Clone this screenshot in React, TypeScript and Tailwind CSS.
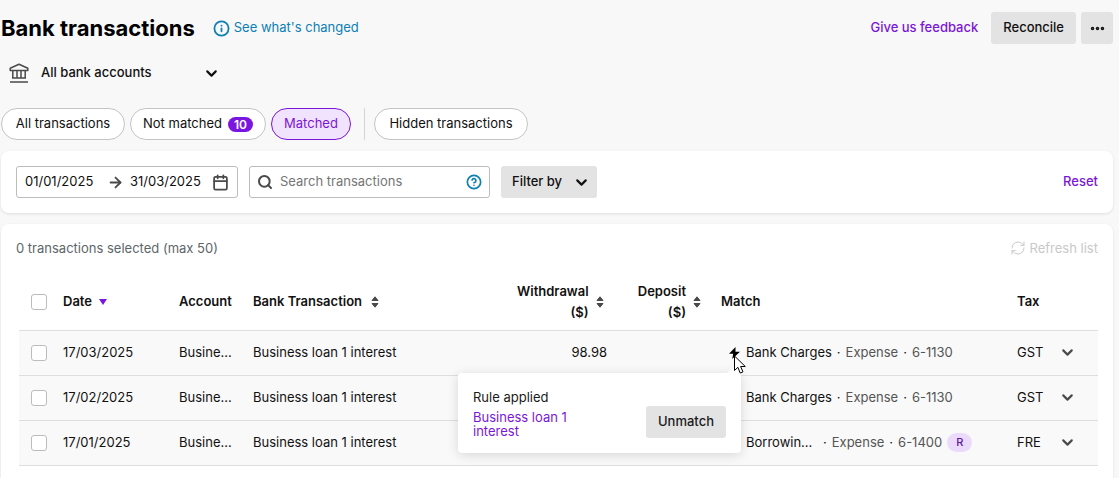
import React, { useState } from 'react';
import { ArrowRight, Calendar, ChevronDown, CircleHelp, Ellipsis, Info, RefreshCw, Search } from 'lucide-react';

const transactions = [
  { id: 1, date: '17/03/2025', account: 'Busine...', description: 'Business loan 1 interest', withdrawal: '98.98', name: 'Bank Charges', code: '6-1130', tax: 'GST', rule: true, reportable: false },
  { id: 2, date: '17/02/2025', account: 'Busine...', description: 'Business loan 1 interest', withdrawal: '', name: 'Bank Charges', code: '6-1130', tax: 'GST', rule: false, reportable: false },
  { id: 3, date: '17/01/2025', account: 'Busine...', description: 'Business loan 1 interest', withdrawal: '', name: 'Borrowin...', code: '6-1400', tax: 'FRE', rule: false, reportable: true },
];

const tabs = [
  { label: 'All transactions', width: 'w-31' },
  { label: 'Not matched', width: 'w-34', count: 10 },
  { label: 'Matched', width: 'w-20' },
];

function BankIcon() {
  return (
    <svg width="20" height="20" viewBox="0 0 20 20" fill="none" stroke="#4a4a4a" strokeWidth="1.5" aria-hidden="true">
      <path d="M1.200 7.500V5.200L10 1.200l8.800 4v2.300H1.200Z" strokeLinejoin="round" />
      <path d="M3.800 8v7M8 8v7M12 8v7M16.200 8v7M3 15h14M1 19h18" />
    </svg>
  );
}

function SortIcon() {
  return (
    <svg width="8" height="12" viewBox="0 0 8 12" fill="#4a4a4a" stroke="#4a4a4a" strokeLinejoin="round" className="shrink-0" aria-hidden="true">
      <path d="M4 .8L7 4.500H1L4 .8ZM4 11.200l3-3.700H1l3 3.700Z" />
    </svg>
  );
}

function Checkbox({ label }: { label: string }) {
  return (
    <input
      type="checkbox"
      aria-label={label}
      className="block size-4 appearance-none rounded-[3px] border border-[#bcbcbc] bg-white checked:bg-[#7b16e0]"
    />
  );
}

function RulePopover() {
  return (
    <div className="absolute top-full right-0 z-10 mt-3.5 flex w-[283px] items-center justify-between rounded-sm bg-white px-[15px] pt-[17px] pb-[15px] text-[#1a1a1a] shadow-[0_2px_12px_rgba(0,0,0,0.14)]">
      <svg width="14" height="12" viewBox="0 0 14 12" fill="white" className="absolute right-0 bottom-full" aria-hidden="true">
        <path d="M0 12L14 0v12Z" />
      </svg>
      <div className="w-[120px] leading-[14px] whitespace-normal">
        <p className="mb-1.5">Rule applied</p>
        <a href="#rule" className="block text-[#7b16d8]">Business loan 1 interest</a>
      </div>
      <button className="mt-4 h-8 rounded-[3px] bg-[#e3e3e3] px-3 font-medium">Unmatch</button>
    </div>
  );
}

function RuleIndicator() {
  return (
    <span className="relative h-3 w-[13px]">
      <svg width="13" height="12" viewBox="0 0 13 12" className="absolute top-0 left-0" aria-label="Rule applied">
        <path d="M7.500 0L1 6.800h4.200L4.200 12l7.800-7.200H7.500V0Z" />
      </svg>
      <RulePopover />
      <svg width="12" height="20" viewBox="0 0 12 20" fill="white" stroke="black" className="absolute top-2 left-1.5 z-20" aria-hidden="true">
        <path d="M.5 1v14.500l3.400-3.200 2.300 5.700 2.800-1.200-2.400-5.300h4.700L.5 1Z" />
      </svg>
    </span>
  );
}

export default function App() {
  const [tab, setTab] = useState('Matched');

  return (
    <div className="min-h-screen overflow-hidden bg-[#f8f8f8] pr-1.5 pl-px font-['Inter',sans-serif] text-[13px] text-[#111]">
      <header className="flex items-center justify-between pt-3">
        <div className="flex items-center gap-[18px]">
          <h1 className="text-[22px] leading-8 font-bold text-black">Bank transactions</h1>
          <a href="#changes" className="flex items-center gap-1 text-[#0d7fb5]">
            <Info size={17} strokeWidth={2.5} />
            See what's changed
          </a>
        </div>
        <div className="flex items-center gap-[5px] font-medium">
          <a href="#feedback" className="mr-2 text-[#7b16d8]">Give us feedback</a>
          <button className="h-8 rounded-[3px] bg-[#e3e3e3] px-3">Reconcile</button>
          <button aria-label="More actions" className="flex h-8 w-8 items-center justify-center rounded-[3px] bg-[#e3e3e3]">
            <Ellipsis size={17} strokeWidth={3} />
          </button>
        </div>
      </header>

      <div className="mt-[13px] flex h-8 items-center gap-3 pl-2">
        <BankIcon />
        <div className="relative w-[179px]">
          <select aria-label="Bank account" className="block h-8 w-full appearance-none bg-transparent font-medium">
            <option>All bank accounts</option>
            <option>Business account</option>
          </select>
          <ChevronDown size={17} strokeWidth={3} className="pointer-events-none absolute top-2 right-0" />
        </div>
      </div>

      <nav className="mt-[19px] flex items-center gap-[5px]">
        {tabs.map((t) => (
          <button
            key={t.label}
            onClick={() => setTab(t.label)}
            className={`flex h-8 items-center justify-center gap-1.5 rounded-full border ${t.width} ${tab === t.label ? 'border-[#7b16d8] bg-[#f1e3fd] text-[#7b16d8]' : 'border-[#c4c4c4] bg-white'}`}
          >
            {t.label}
            {t.count && <span className="rounded-full bg-[#7b16e0] px-1.5 text-xs leading-[15px] font-semibold text-white">{t.count}</span>}
          </button>
        ))}
        <span className="ml-2 mr-1 h-8 w-px bg-[#d4d4d4]" />
        <button onClick={() => setTab('Hidden transactions')} className="h-8 w-[154px] rounded-full border border-[#c4c4c4] bg-white">
          Hidden transactions
        </button>
      </nav>

      <section className="mt-[11px] flex items-center justify-between rounded-lg bg-white p-[15px] shadow-[0_1px_3px_rgba(0,0,0,0.1)]">
        <div className="flex items-center gap-[11px]">
          <div className="flex h-8 w-[222px] items-center rounded-[3px] border border-[#bcbcbc] px-2">
            <input aria-label="Date from" defaultValue="01/01/2025" className="w-[82px]" />
            <ArrowRight size={17} strokeWidth={2.5} className="mr-1.5 shrink-0 text-[#4a4a4a]" />
            <input aria-label="Date to" defaultValue="31/03/2025" className="w-20" />
            <Calendar size={17} strokeWidth={2.5} className="ml-auto shrink-0 text-[#4a4a4a]" />
          </div>
          <div className="flex h-8 w-[241px] items-center rounded-[3px] border border-[#bcbcbc] px-[7px]">
            <Search size={16} strokeWidth={3} className="mr-[7px] shrink-0 text-[#4a4a4a]" />
            <input aria-label="Search transactions" placeholder="Search transactions" className="min-w-0 flex-1 placeholder:text-[#767676]" />
            <CircleHelp size={16} strokeWidth={2.5} className="shrink-0 text-[#0d7fb5]" />
          </div>
          <button className="flex h-8 w-24 items-center justify-between rounded-[3px] bg-[#e3e3e3] pr-[7px] pl-[11px] font-medium">
            Filter by
            <ChevronDown size={17} strokeWidth={3} />
          </button>
        </div>
        <button className="font-medium text-[#7b16d8]">Reset</button>
      </section>

      <section className="mt-[11px] rounded-lg bg-white px-[15px] pt-3.5 pb-8 shadow-[0_1px_3px_rgba(0,0,0,0.1)]">
        <div className="flex items-center justify-between leading-5">
          <p className="text-[#5d6669]">0 transactions selected (max 50)</p>
          <button disabled className="flex items-center gap-1 text-[#c9c9c9]">
            <RefreshCw size={16} strokeWidth={1.5} />
            Refresh list
          </button>
        </div>

        <div className="mt-4 pl-[3px]">
          <table className="w-full table-fixed border-collapse text-left whitespace-nowrap">
            <colgroup>
              <col className="w-9" />
              <col className="w-[116px]" />
              <col className="w-[74px]" />
              <col />
              <col className="w-[106px]" />
              <col className="w-[98px]" />
              <col className="w-[296px]" />
              <col className="w-[42px]" />
              <col className="w-[47px]" />
            </colgroup>
            <thead>
              <tr className="h-14 border-b border-[#dedede] [&>th]:px-2 [&>th]:font-semibold">
                <th><div className="pl-1"><Checkbox label="Select all transactions" /></div></th>
                <th aria-sort="descending">
                  <button className="flex items-center gap-[7px]">
                    Date
                    <svg width="8" height="6" viewBox="0 0 8 6" fill="#7b16e0" aria-hidden="true"><path d="M0 0h8L4 6Z" /></svg>
                  </button>
                </th>
                <th>Account</th>
                <th><button className="flex items-center gap-[9px]">Bank Transaction <SortIcon /></button></th>
                <th>
                  <button className="ml-auto flex items-center gap-[7px] pr-1 text-right leading-[21px]">
                    <span>Withdrawal<br />($)</span> <SortIcon />
                  </button>
                </th>
                <th>
                  <button className="ml-auto flex items-center gap-[7px] pr-1 text-right leading-[21px]">
                    <span>Deposit<br />($)</span> <SortIcon />
                  </button>
                </th>
                <th>Match</th>
                <th>Tax</th>
                <th aria-label="Details"></th>
              </tr>
            </thead>
            <tbody>
              {transactions.map((t) => (
                <tr key={t.id} className="h-[45px] border-b border-[#dedede] bg-[#f9f9f9] [&>td]:px-2">
                  <td><div className="pl-1"><Checkbox label={`Select ${t.date}`} /></div></td>
                  <td>{t.date}</td>
                  <td>{t.account}</td>
                  <td>{t.description}</td>
                  <td className="text-right">{t.withdrawal}</td>
                  <td></td>
                  <td>
                    <div className="flex items-center gap-[5px] pl-[7px]">
                      {t.rule ? <RuleIndicator /> : <span className="w-[13px]" />}
                      <span className={t.reportable ? 'w-[72px]' : ''}>{t.name}</span>
                      <span>·</span>
                      <span className="text-[#555]">Expense</span>
                      <span>·</span>
                      <span className="text-[#555]">{t.code}</span>
                      {t.reportable && <span className="rounded-full bg-[#ecdafc] px-[9px] text-[11px] leading-[19px] font-medium text-[#5a1a99]">R</span>}
                    </div>
                  </td>
                  <td>{t.tax}</td>
                  <td>
                    <button aria-label={`Show details for ${t.date}`} className="block">
                      <ChevronDown size={17} strokeWidth={3} className="text-[#4a4a4a]" />
                    </button>
                  </td>
                </tr>
              ))}
            </tbody>
          </table>
        </div>
      </section>
    </div>
  );
}
